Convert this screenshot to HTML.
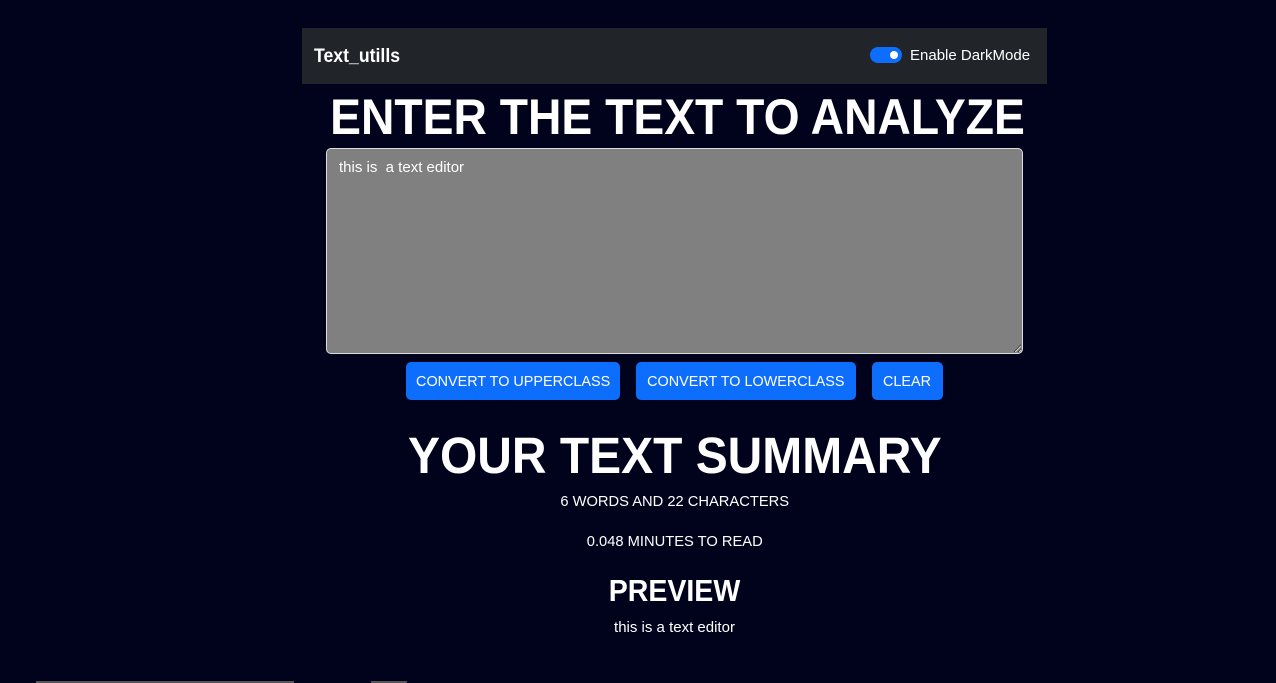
<!DOCTYPE html>
<html><head><style>
body{margin:0;background:#01021c;width:1276px;height:683px;overflow:hidden;font-family:"Liberation Sans",sans-serif;color:#fff;position:relative}
.nav{position:absolute;left:302px;top:28px;width:745px;height:56px;background:#212529}
.brand{position:absolute;left:12px;top:18px;font-size:19px;font-weight:bold;transform:scaleX(.93);transform-origin:left}
.tog{position:absolute;left:568px;top:19px;width:32px;height:16px;border-radius:8px;background:#0d6efd}
.tog:after{content:"";position:absolute;right:4px;top:4px;width:8px;height:8px;border-radius:50%;background:#fff}
.tl{position:absolute;left:608px;top:19px;font-size:15px;transform:scaleX(1.0);transform-origin:left}
.c{position:absolute;left:302px;width:745px;text-align:center;white-space:nowrap}
.sq{display:inline-block;transform:scaleX(.925)}
textarea{position:absolute;left:326px;top:148px;width:697px;height:206px;box-sizing:border-box;background:#808080;border:1px solid #ddd;border-radius:5px;color:#fff;font:15px "Liberation Sans",sans-serif;padding:10px 12px;resize:both}
.b{position:absolute;top:362px;height:38px;background:#0d6efd;border-radius:5px;font-size:15px;line-height:39px;text-align:center}
.b span{display:inline-block;transform:scaleX(.96)}
.bar{position:absolute;top:681px;height:2px;background:#555}
</style></head><body>
<div class="nav"><div class="brand">Text_utills</div><div class="tog"></div><div class="tl">Enable DarkMode</div></div>
<div class="c" style="top:88px;font-size:50px;font-weight:bold"><span class="sq">ENTER THE TEXT TO ANALYZE</span></div>
<textarea>this is  a text editor</textarea>
<div class="b" style="left:406px;width:214px"><span>CONVERT TO UPPERCLASS</span></div>
<div class="b" style="left:636px;width:220px"><span>CONVERT TO LOWERCLASS</span></div>
<div class="b" style="left:872px;width:71px"><span>CLEAR</span></div>
<div class="c" style="top:426px;font-size:51px;font-weight:bold"><span class="sq" style="transform:scaleX(.94)">YOUR TEXT SUMMARY</span></div>
<div class="c" style="top:493px;font-size:15px"><span class="sq" style="transform:scaleX(.98)">6 WORDS AND 22 CHARACTERS</span></div>
<div class="c" style="top:533px;font-size:15px"><span class="sq" style="transform:scaleX(.98)">0.048 MINUTES TO READ</span></div>
<div class="c" style="top:573px;font-size:31px;font-weight:bold"><span class="sq" style="transform:scaleX(.92)">PREVIEW</span></div>
<div class="c" style="top:619px;font-size:15px"><span class="sq" style="transform:scaleX(1)">this is a text editor</span></div>
<div class="bar" style="left:36px;width:258px"></div>
<div class="bar" style="left:371px;width:36px"></div>
</body></html>
